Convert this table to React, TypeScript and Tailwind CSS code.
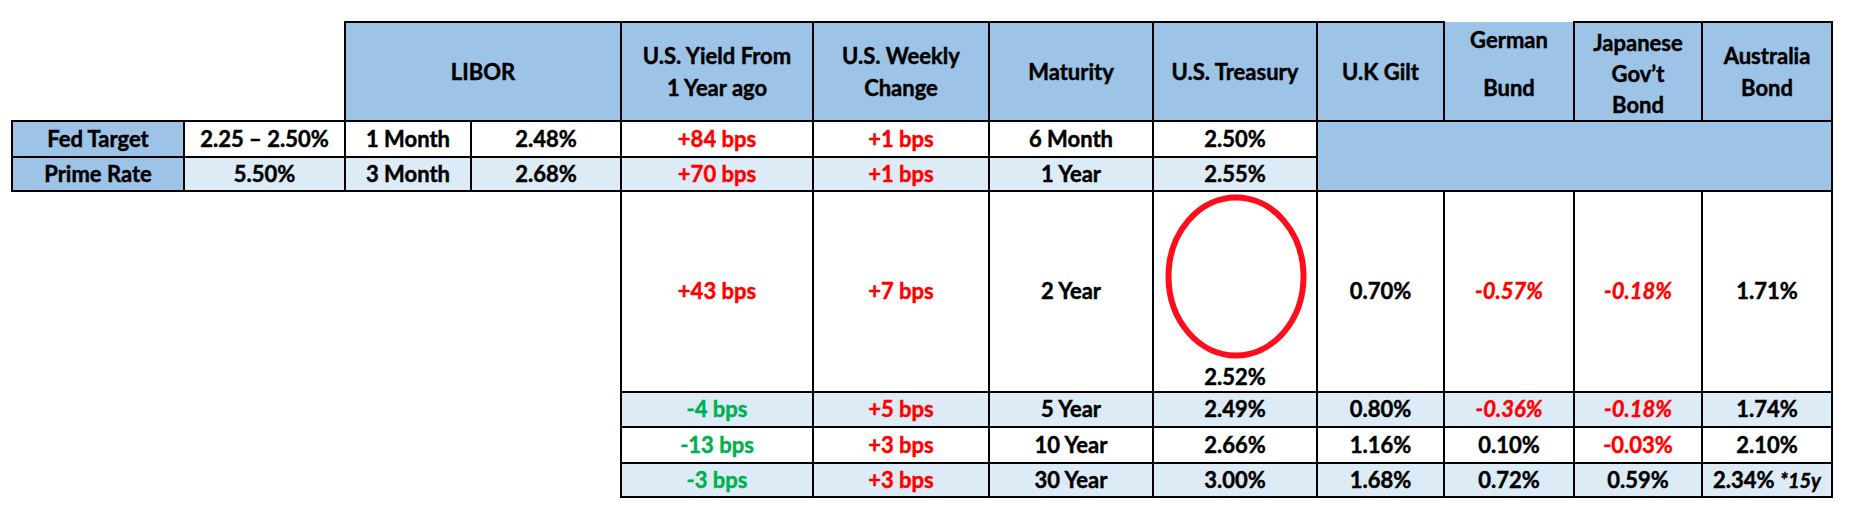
import React from 'react';

type Tone = 'black' | 'red' | 'green' | 'redItalic';

const toneClass: Record<Tone, string> = {
  black: 'text-black',
  red: 'text-[#ff0000]',
  green: 'text-[#00b050]',
  redItalic: 'text-[#ff0000] italic',
};

const cols = [172, 161, 126, 150, 192, 176, 164, 164, 127, 130, 128, 130];

const edge = 'border-2 border-black p-0 text-center';
const cell = `${edge} align-middle`;
const blue = 'bg-[#9dc3e6]';
const light = 'bg-[#ddebf7]';

function V({ t, tone = 'black' }: { t: string; tone?: Tone }) {
  return <span className={toneClass[tone]}>{t}</span>;
}

// lower block: yield, weekly, maturity, treasury, gilt, bund, jgb, aus
const lower: { bg: string; h: string; v: [string, Tone][] }[] = [
  {
    bg: light,
    h: 'h-[35px]',
    v: [
      ['-4 bps', 'green'],
      ['+5 bps', 'red'],
      ['5 Year', 'black'],
      ['2.49%', 'black'],
      ['0.80%', 'black'],
      ['-0.36%', 'redItalic'],
      ['-0.18%', 'redItalic'],
      ['1.74%', 'black'],
    ],
  },
  {
    bg: 'bg-white',
    h: 'h-[36px]',
    v: [
      ['-13 bps', 'green'],
      ['+3 bps', 'red'],
      ['10 Year', 'black'],
      ['2.66%', 'black'],
      ['1.16%', 'black'],
      ['0.10%', 'black'],
      ['-0.03%', 'red'],
      ['2.10%', 'black'],
    ],
  },
];

export default function App() {
  return (
    <div
      className="w-[1854px] h-[528px] bg-white pt-[21px] pl-[11px] text-[22px] font-bold text-black leading-[1.2] [-webkit-text-stroke:0.45px]"
      style={{ fontFamily: 'Lato, "Open Sans", sans-serif' }}
    >
      <table className="table-fixed border-collapse">
        <colgroup>
          {cols.map((w, i) => (
            <col key={i} style={{ width: w }} />
          ))}
        </colgroup>
        <tbody>
          {/* header */}
          <tr className="h-[98px] leading-[32px]">
            <td colSpan={2} className="p-0 bg-white" />
            <td colSpan={2} className={`${cell} ${blue}`}>LIBOR</td>
            <td className={`${cell} ${blue}`}>U.S. Yield From<br />1 Year ago</td>
            <td className={`${cell} ${blue}`}>U.S. Weekly<br />Change</td>
            <td className={`${cell} ${blue}`}>Maturity</td>
            <td className={`${cell} ${blue}`}>U.S. Treasury</td>
            <td className={`${cell} ${blue}`}>U.K Gilt</td>
            <td className={`${edge} ${blue} align-top [border-top-style:hidden]`}>
              <div className="pt-[2px]">German</div>
              <div className="pt-[16px]">Bund</div>
            </td>
            <td className={`${cell} ${blue}`}>
              <div className="pt-[4px] leading-[31px]">Japanese<br />Gov’t<br />Bond</div>
            </td>
            <td className={`${cell} ${blue}`}>Australia<br />Bond</td>
          </tr>

          {/* Fed target row */}
          <tr className="h-[36px]">
            <td className={`${cell} ${blue}`}>Fed Target</td>
            <td className={`${cell} bg-white`}>2.25 – 2.50%</td>
            <td className={`${cell} bg-white`}>1 Month</td>
            <td className={`${cell} bg-white`}>2.48%</td>
            <td className={`${cell} bg-white`}><V t="+84 bps" tone="red" /></td>
            <td className={`${cell} bg-white`}><V t="+1 bps" tone="red" /></td>
            <td className={`${cell} bg-white`}>6 Month</td>
            <td className={`${cell} bg-white`}>2.50%</td>
            <td colSpan={4} rowSpan={2} className={`${cell} ${blue}`} />
          </tr>

          {/* Prime rate row */}
          <tr className="h-[34px]">
            <td className={`${cell} ${blue}`}>Prime Rate</td>
            <td className={`${cell} ${light}`}>5.50%</td>
            <td className={`${cell} ${light}`}>3 Month</td>
            <td className={`${cell} ${light}`}>2.68%</td>
            <td className={`${cell} ${light}`}><V t="+70 bps" tone="red" /></td>
            <td className={`${cell} ${light}`}><V t="+1 bps" tone="red" /></td>
            <td className={`${cell} ${light}`}>1 Year</td>
            <td className={`${cell} ${light}`}>2.55%</td>
          </tr>

          {/* 2 year row, tall */}
          <tr className="h-[201px]">
            <td colSpan={4} rowSpan={4} className="p-0 bg-white" />
            <td className={`${cell} bg-white`}><V t="+43 bps" tone="red" /></td>
            <td className={`${cell} bg-white`}><V t="+7 bps" tone="red" /></td>
            <td className={`${cell} bg-white`}>2 Year</td>
            <td className={`${edge} bg-white align-bottom relative`}>
              <svg
                className="absolute left-[11px] top-[2px]"
                width="142"
                height="165"
                viewBox="0 0 142 165"
              >
                <defs>
                  <filter id="soft" x="-5%" y="-5%" width="110%" height="110%">
                    <feGaussianBlur stdDeviation="0.7" />
                  </filter>
                </defs>
                <ellipse
                  cx="71"
                  cy="82.5"
                  rx="67.5"
                  ry="79"
                  fill="none"
                  stroke="#ff0d1a"
                  strokeWidth="6"
                  filter="url(#soft)"
                />
              </svg>
              <div className="pb-[1px]">2.52%</div>
            </td>
            <td className={`${cell} bg-white`}>0.70%</td>
            <td className={`${cell} bg-white`}><V t="-0.57%" tone="redItalic" /></td>
            <td className={`${cell} bg-white`}><V t="-0.18%" tone="redItalic" /></td>
            <td className={`${cell} bg-white`}>1.71%</td>
          </tr>

          {lower.map((row, r) => (
            <tr key={r} className={row.h}>
              {row.v.map(([t, tone], i) => (
                <td key={i} className={`${cell} ${row.bg}`}>
                  <V t={t} tone={tone} />
                </td>
              ))}
            </tr>
          ))}

          {/* 30 year row */}
          <tr className="h-[34px]">
            <td className={`${cell} ${light}`}><V t="-3 bps" tone="green" /></td>
            <td className={`${cell} ${light}`}><V t="+3 bps" tone="red" /></td>
            <td className={`${cell} ${light}`}>30 Year</td>
            <td className={`${cell} ${light}`}>3.00%</td>
            <td className={`${cell} ${light}`}>1.68%</td>
            <td className={`${cell} ${light}`}>0.72%</td>
            <td className={`${cell} ${light}`}>0.59%</td>
            <td className={`${cell} ${light}`}>
              2.34% <span className="italic text-[20px]">*15y</span>
            </td>
          </tr>
        </tbody>
      </table>
    </div>
  );
}
